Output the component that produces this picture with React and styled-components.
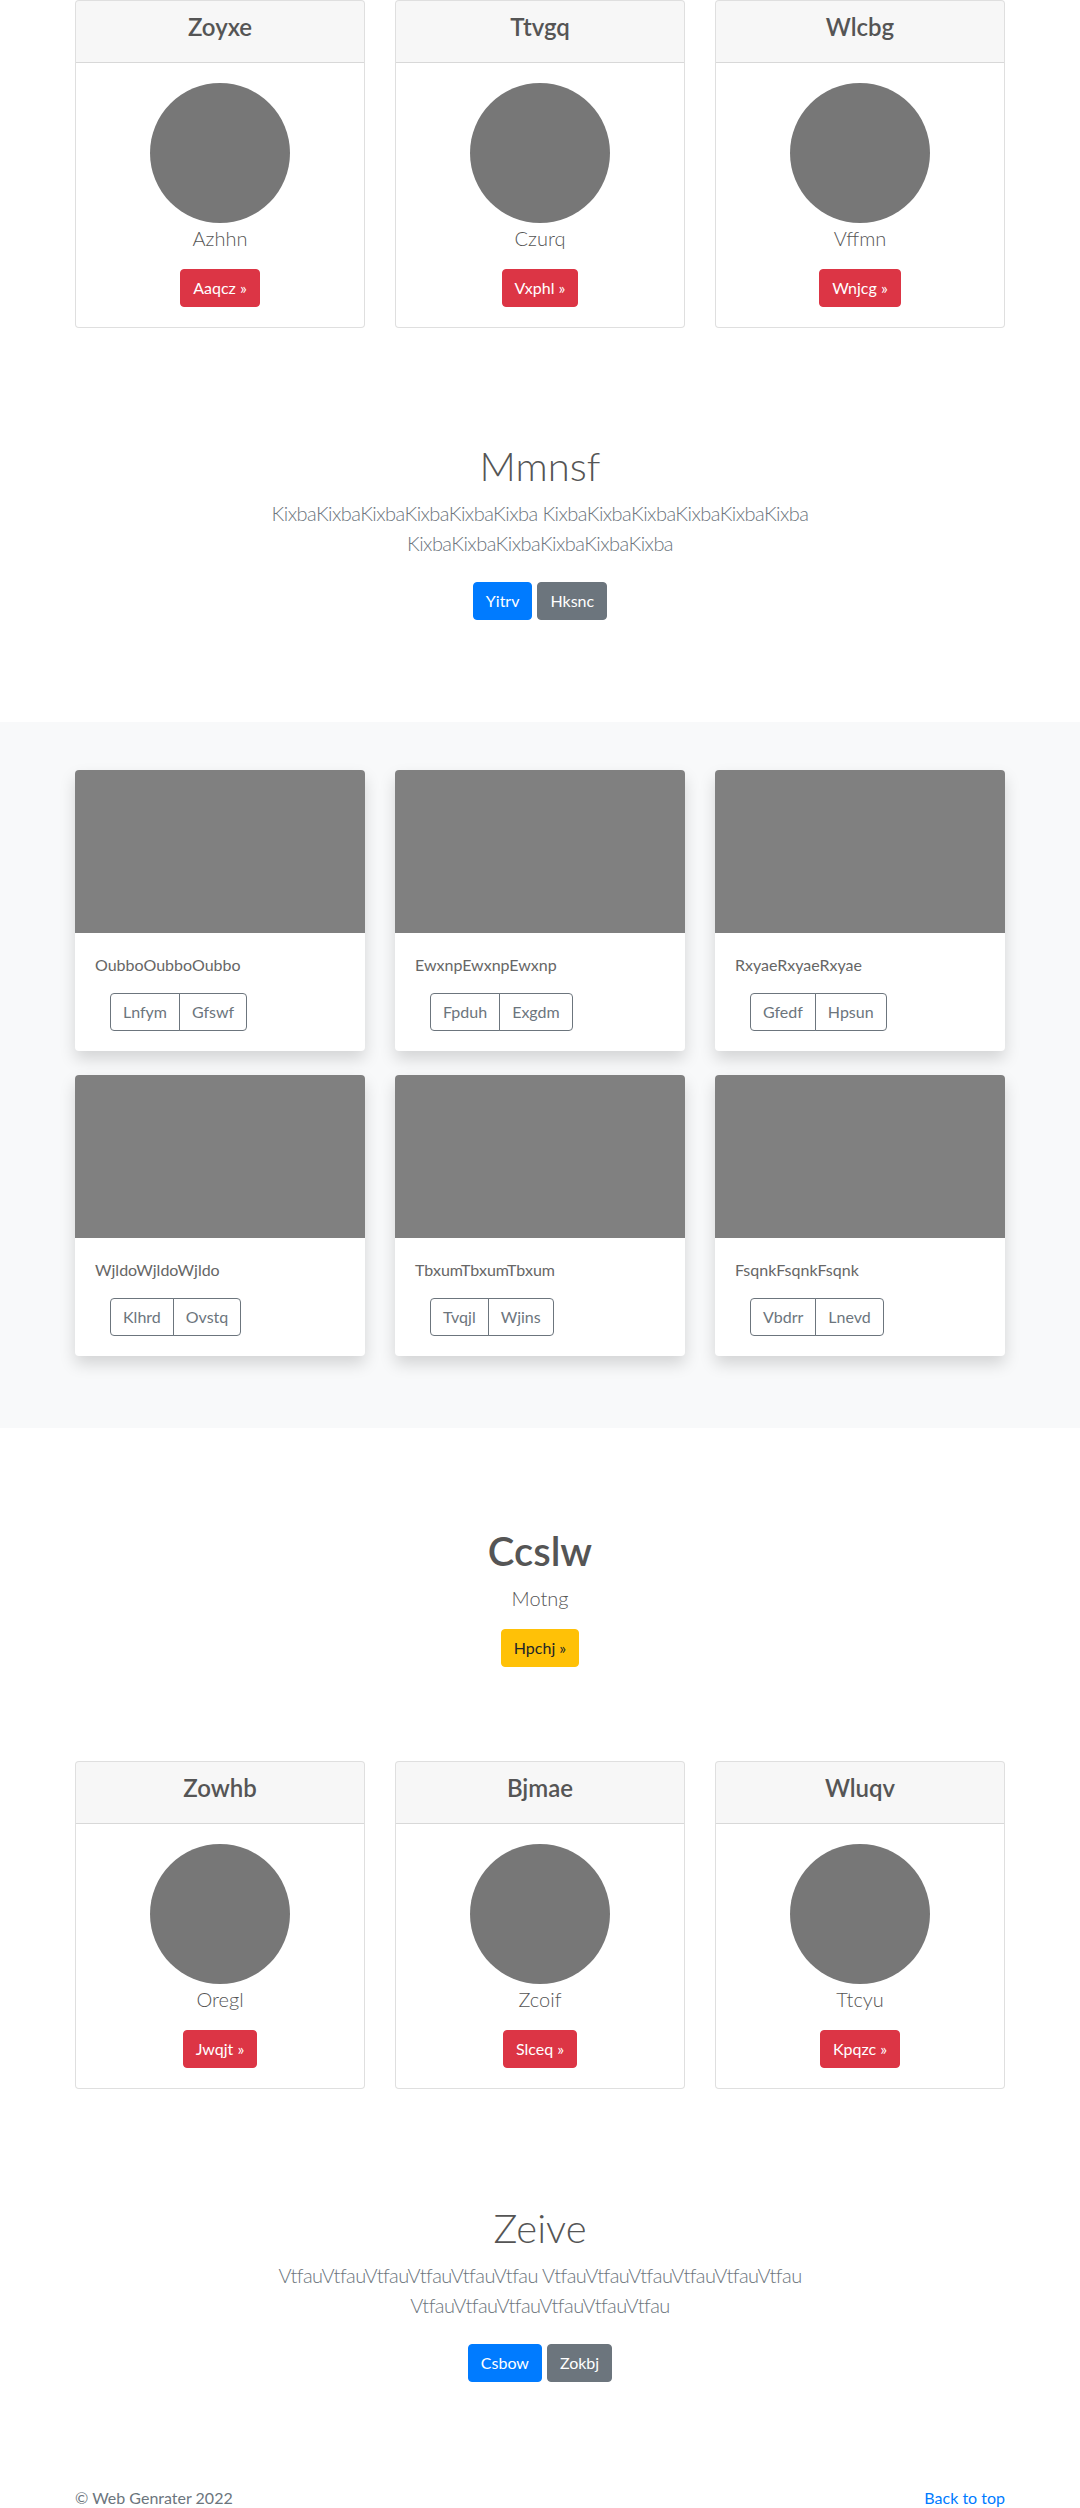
import React from "react";
import styled, { createGlobalStyle, css } from "styled-components";

/**
 * Estilos globales
 */
const GlobalStyle = createGlobalStyle`
  body {
    margin: 0;
    font-family: Lato, "Liberation Sans", sans-serif;
    font-size: 16px;
    line-height: 1.5;
    color: #555;
    background: #fff;
  }

  * {
    box-sizing: border-box;
  }
`;

const colors = {
  primary: "#007bff",
  secondary: "#6c757d",
  danger: "#dc3545",
  warning: "#ffc107",
  muted: "#6c757d",
  light: "#f8f9fa",
  border: "rgba(0, 0, 0, 0.125)",
};

/**
 * Contenedor centrado
 */
const Container = styled.div`
  max-width: ${(p) => p.$max || 960}px;
  margin: 0 auto;
  padding: 0 15px;
`;

/**
 * Sección genérica con espaciado vertical
 */
const Section = styled.section`
  padding-top: ${(p) => p.$top || 0}px;
  padding-bottom: ${(p) => p.$bottom || 0}px;
  margin-top: ${(p) => p.$gap || 0}px;
  background: ${(p) => (p.$light ? colors.light : "#fff")};
  text-align: ${(p) => (p.$center ? "center" : "left")};
`;

/**
 * Rejilla de tres columnas
 */
const CardGrid = styled.div`
  display: grid;
  grid-template-columns: repeat(3, 1fr);
  column-gap: 30px;
  row-gap: 24px;
`;

/**
 * Botón base
 */
const Button = styled.a`
  display: inline-block;
  padding: 6px 12px;
  font-size: 16px;
  line-height: 1.5;
  border-radius: 4px;
  border: 1px solid transparent;
  text-decoration: none;
  cursor: pointer;
  white-space: nowrap;

  ${(p) =>
    p.$variant === "primary" &&
    css`
      background: ${colors.primary};
      border-color: ${colors.primary};
      color: #fff;
    `}
  ${(p) =>
    p.$variant === "secondary" &&
    css`
      background: ${colors.secondary};
      border-color: ${colors.secondary};
      color: #fff;
    `}
  ${(p) =>
    p.$variant === "danger" &&
    css`
      background: ${colors.danger};
      border-color: ${colors.danger};
      color: #fff;
    `}
  ${(p) =>
    p.$variant === "warning" &&
    css`
      background: ${colors.warning};
      border-color: ${colors.warning};
      color: #212529;
    `}
`;

/* ---------- Tarjetas de perfil ---------- */

const ProfileCard = styled.div`
  border: 1px solid ${colors.border};
  border-radius: 4px;
  background: #fff;
  overflow: hidden;
`;

const ProfileHeader = styled.div`
  background: rgba(0, 0, 0, 0.03);
  border-bottom: 1px solid ${colors.border};
  padding: 12px 20px;
  text-align: center;
`;

const ProfileTitle = styled.h4`
  margin: 0 0 8px;
  font-size: 24px;
  font-weight: 600;
  line-height: 1.2;
  color: #555;
`;

const ProfileBody = styled.div`
  padding: 20px;
  text-align: center;
`;

const Avatar = styled.div`
  width: 140px;
  height: 140px;
  margin: 0 auto;
  border-radius: 50%;
  background: #777;
`;

const Lead = styled.p`
  margin: 0 0 16px;
  font-size: 20px;
  font-weight: 300;
  line-height: 1.5;
  letter-spacing: ${(p) => (p.$tight ? "-0.55px" : "normal")};
  color: ${(p) => (p.$muted ? colors.muted : "#555")};
`;

/* ---------- Jumbotron ---------- */

const HeroTitle = styled.h1`
  margin: 0 0 8px;
  font-size: 40px;
  font-weight: ${(p) => (p.$bold ? 600 : 300)};
  line-height: 1.2;
  color: #555;
`;

const ButtonRow = styled.div`
  display: flex;
  justify-content: center;
  gap: 5px;
  padding: 8px 0;
`;

/* ---------- Álbum ---------- */

const AlbumCard = styled.div`
  background: #fff;
  border-radius: 4px;
  overflow: hidden;
  box-shadow: 0 8px 16px rgba(0, 0, 0, 0.15);
`;

const Thumb = styled.div`
  height: 163px;
  background: #808080;
`;

const AlbumBody = styled.div`
  padding: 20px;
`;

const AlbumText = styled.p`
  margin: 0 0 16px;
  font-size: 16px;
  color: #666;
`;

const ButtonGroup = styled.div`
  display: inline-flex;
  margin-left: 15px;
`;

const OutlineButton = styled.a`
  padding: 6px 12px;
  font-size: 16px;
  line-height: 1.5;
  color: ${colors.secondary};
  border: 1px solid ${colors.secondary};
  text-decoration: none;

  &:first-child {
    border-radius: 4px 0 0 4px;
  }

  &:last-child {
    border-radius: 0 4px 4px 0;
    margin-left: -1px;
  }
`;

/* ---------- Footer ---------- */

const Footer = styled.footer`
  padding: 48px 0;
`;

const FooterRow = styled.div`
  display: flex;
  justify-content: space-between;
  align-items: center;
  color: ${colors.muted};
`;

const FooterLink = styled.a`
  color: ${colors.primary};
  text-decoration: none;
`;

/* ---------- Datos ---------- */

const profilesTop = [
  { title: "Zoyxe", name: "Azhhn", cta: "Aaqcz" },
  { title: "Ttvgq", name: "Czurq", cta: "Vxphl" },
  { title: "Wlcbg", name: "Vffmn", cta: "Wnjcg" },
];

const profilesBottom = [
  { title: "Zowhb", name: "Oregl", cta: "Jwqjt" },
  { title: "Bjmae", name: "Zcoif", cta: "Slceq" },
  { title: "Wluqv", name: "Ttcyu", cta: "Kpqzc" },
];

const albums = [
  { text: "OubboOubboOubbo", a: "Lnfym", b: "Gfswf" },
  { text: "EwxnpEwxnpEwxnp", a: "Fpduh", b: "Exgdm" },
  { text: "RxyaeRxyaeRxyae", a: "Gfedf", b: "Hpsun" },
  { text: "WjldoWjldoWjldo", a: "Klhrd", b: "Ovstq" },
  { text: "TbxumTbxumTbxum", a: "Tvqjl", b: "Wjins" },
  { text: "FsqnkFsqnkFsqnk", a: "Vbdrr", b: "Lnevd" },
];

const ProfileRow = ({ items }) => (
  <Container>
    <CardGrid>
      {items.map((item) => (
        <ProfileCard key={item.title}>
          <ProfileHeader>
            <ProfileTitle>{item.title}</ProfileTitle>
          </ProfileHeader>
          <ProfileBody>
            <Avatar />
            <Lead>{item.name}</Lead>
            <Button $variant="danger">{item.cta} »</Button>
          </ProfileBody>
        </ProfileCard>
      ))}
    </CardGrid>
  </Container>
);

const Hero = ({ title, word, primary, secondary }) => {
  const chunk = word.repeat(6);
  return (
    <Section $top={48} $bottom={48} $center>
      <Container $max={640}>
        <HeroTitle>{title}</HeroTitle>
        <Lead $muted $tight>{`${chunk} ${chunk} ${chunk}`}</Lead>
        <ButtonRow>
          <Button $variant="primary">{primary}</Button>
          <Button $variant="secondary">{secondary}</Button>
        </ButtonRow>
      </Container>
    </Section>
  );
};

const App = () => (
  <>
    <GlobalStyle />

    {/* Tarjetas superiores */}
    <Section $bottom={66}>
      <ProfileRow items={profilesTop} />
    </Section>

    <Hero title="Mmnsf" word="Kixba" primary="Yitrv" secondary="Hksnc" />

    {/* Álbum */}
    <Section $light $gap={46} $top={48} $bottom={72}>
      <Container>
        <CardGrid>
          {albums.map((al) => (
            <AlbumCard key={al.text}>
              <Thumb />
              <AlbumBody>
                <AlbumText>{al.text}</AlbumText>
                <ButtonGroup>
                  <OutlineButton>{al.a}</OutlineButton>
                  <OutlineButton>{al.b}</OutlineButton>
                </ButtonGroup>
              </AlbumBody>
            </AlbumCard>
          ))}
        </CardGrid>
      </Container>
    </Section>

    {/* Llamado a la acción */}
    <Section $top={99} $bottom={94} $center>
      <Container>
        <HeroTitle $bold>Ccslw</HeroTitle>
        <Lead>Motng</Lead>
        <Button $variant="warning">Hpchj »</Button>
      </Container>
    </Section>

    {/* Tarjetas inferiores */}
    <Section $bottom={67}>
      <ProfileRow items={profilesBottom} />
    </Section>

    <Hero title="Zeive" word="Vtfau" primary="Csbow" secondary="Zokbj" />

    <Footer>
      <Container>
        <FooterRow>
          <span>© Web Genrater 2022</span>
          <FooterLink href="#">Back to top</FooterLink>
        </FooterRow>
      </Container>
    </Footer>
  </>
);

export default App;
